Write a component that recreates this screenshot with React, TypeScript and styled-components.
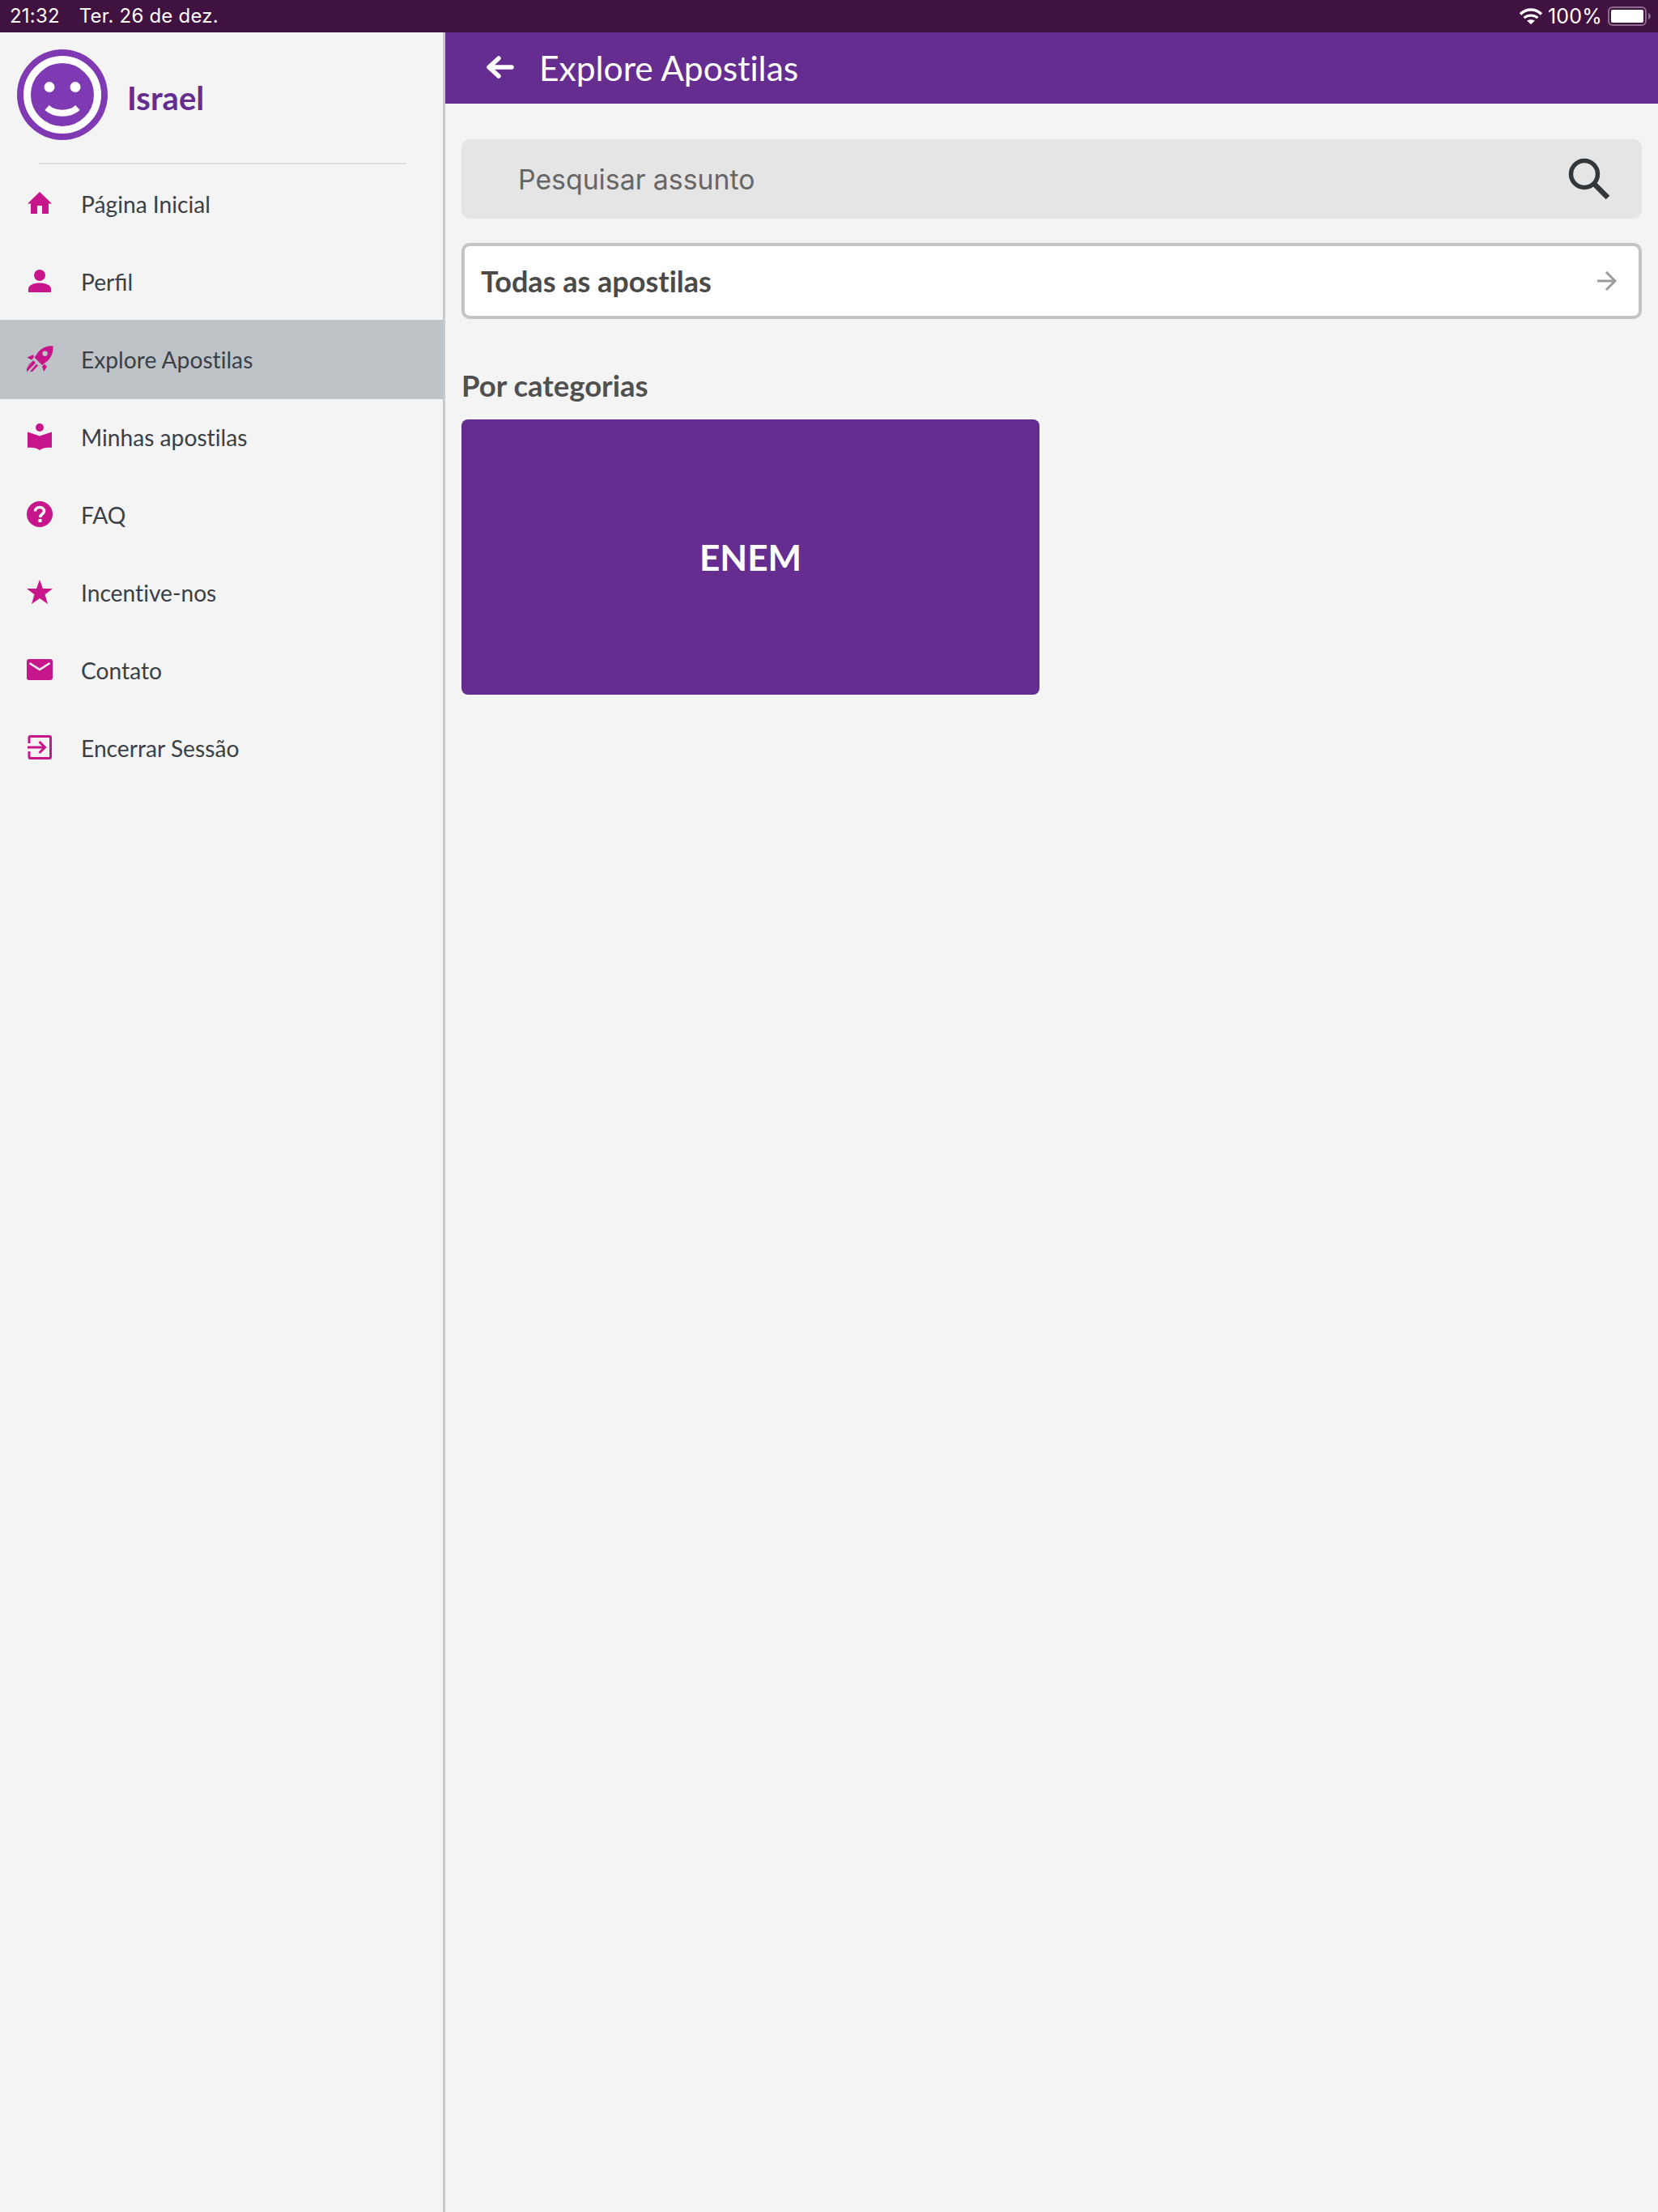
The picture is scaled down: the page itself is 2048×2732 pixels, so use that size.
import React from "react";
import styled, { createGlobalStyle } from "styled-components";

const Global = createGlobalStyle`
  html, body { margin: 0; padding: 0; background: #f4f4f4; }
  * { box-sizing: border-box; }
`;

const Page = styled.div`
  width: 2048px;
  height: 2732px;
  display: flex;
  flex-direction: column;
  background: #f4f4f4;
  font-family: Lato, "Liberation Sans", sans-serif;
  overflow: hidden;
`;

const StatusBar = styled.div`
  height: 40px;
  flex: none;
  background: #40123f;
  color: #fff;
  display: flex;
  align-items: center;
  justify-content: space-between;
  padding: 0 9px 0 12px;
  font-family: Inter, "Liberation Sans", sans-serif;
  font-size: 24px;
  letter-spacing: 0.2px;
  line-height: 40px;
`;

const StatusLeft = styled.div`
  display: flex;
  gap: 24px;
`;

const StatusRight = styled.div`
  display: flex;
  align-items: center;
  gap: 7px;
`;

const BatteryText = styled.span`
  font-size: 25px;
`;

const Body = styled.div`
  flex: 1;
  display: flex;
  min-height: 0;
`;

const Sidebar = styled.aside`
  width: 550px;
  flex: none;
  border-right: 3px solid #c9c9c9;
  background: #f4f4f4;
`;

const Profile = styled.div`
  height: 161px;
  padding: 21px 0 0 21px;
  display: flex;
  align-items: flex-start;
  gap: 24px;
`;

const UserName = styled.div`
  font-size: 40px;
  font-weight: 700;
  color: #652d8f;
  line-height: 46px;
  margin-top: 37px;
`;

const Divider = styled.div`
  height: 2px;
  margin: 0 45px 0 48px;
  background: #dedede;
`;

const Menu = styled.nav`
  padding-top: 1px;
  display: flex;
  flex-direction: column;
`;

const Row = styled.div<{ $active?: boolean }>`
  height: ${(p) => (p.$active ? "98px" : "96px")};
  margin: ${(p) => (p.$active ? "-1px 0" : "0")};
  padding-left: 32px;
  display: flex;
  align-items: center;
  gap: 34px;
  background: ${(p) => (p.$active ? "#bdc3c7" : "transparent")};
`;

const RowIcon = styled.div`
  width: 34px;
  height: 34px;
  flex: none;
  margin-top: -2px;
  color: #c7158c;
  display: flex;
  align-items: center;
  justify-content: center;
`;

const RowLabel = styled.span<{ $lig?: boolean }>`
  font-size: 28.200px;
  color: #3a4046;
  line-height: 34px;
  font-variant-ligatures: ${(p) => (p.$lig ? "normal" : "none")};
`;

const Main = styled.main`
  flex: 1;
  min-width: 0;
  display: flex;
  flex-direction: column;
`;

const Header = styled.header`
  height: 88px;
  flex: none;
  background: #652d8f;
  display: flex;
  align-items: center;
  padding-left: 51px;
  gap: 31px;
  color: #fff;
`;

const HeaderTitle = styled.h1`
  margin: 0;
  font-size: 42.500px;
  font-weight: 400;
  line-height: 50px;
  color: #fff;
  font-variant-ligatures: none;
`;

const Content = styled.div`
  padding: 44px 20px 0;
  display: flex;
  flex-direction: column;
`;

const SearchBox = styled.div`
  height: 98px;
  border-radius: 10px;
  background: #e5e5e5;
  display: flex;
  align-items: center;
  justify-content: space-between;
  padding: 0 39px 0 70px;
`;

const Placeholder = styled.span`
  font-family: Inter, "Liberation Sans", sans-serif;
  font-size: 33.800px;
  color: #666;
`;

const AllButton = styled.div`
  margin-top: 30px;
  height: 94px;
  border: 4px solid #c4c4c4;
  border-radius: 10px;
  background: #fff;
  display: flex;
  align-items: center;
  justify-content: space-between;
  padding: 0 27px 0 20px;
`;

const AllLabel = styled.span`
  font-size: 36px;
  font-weight: 700;
  color: #4a4a4a;
  font-variant-ligatures: none;
`;

const SectionTitle = styled.h2`
  margin: 60px 0 0;
  font-size: 36.500px;
  font-weight: 700;
  line-height: 44px;
  color: #505050;
`;

const CategoryCard = styled.div`
  margin-top: 20px;
  width: 714px;
  height: 340px;
  border-radius: 8px;
  background: #652d8f;
  color: #fff;
  display: flex;
  align-items: center;
  justify-content: center;
  font-size: 44px;
  font-weight: 700;
`;

const Svg = ({ w, h, children }: { w: number; h: number; children: React.ReactNode }) => (
  <svg width={w} height={h} viewBox={`0 0 ${w} ${h}`} fill="currentColor" style={{ display: "block", flex: "none" }}>
    {children}
  </svg>
);

const items: { label: string; active?: boolean; lig?: boolean; icon: React.ReactNode }[] = [
  {
    label: "Página Inicial",
    icon: (
      <Svg w={30} h={28}>
        <path d="M15 0 30 14.500H26V27H18V17H12V27H4V14.500H0Z" />
      </Svg>
    ),
  },
  {
    label: "Perfil",
    lig: true,
    icon: (
      <Svg w={30} h={28}>
        <circle cx="15" cy="7" r="7" />
        <path d="M1 28V24C1 19 8 16.500 15 16.500S29 19 29 24V28Z" />
      </Svg>
    ),
  },
  {
    label: "Explore Apostilas",
    active: true,
    icon: (
      <Svg w={33} h={33}>
        <path fillRule="evenodd" d="M32.500 0.500C33 7 31 13.500 26 18.500L19 24 9.500 14.500 14.500 7.500C19 2.500 26 -0.500 32.500 0.500ZM22.500 6.500A3.200 3.200 0 1 0 22.600 12.900 3.200 3.200 0 1 0 22.500 6.500Z" />
        <path d="M8 11 0.500 14.500 6 17.500 9 14ZM19 25.500 21 32 25 26 22 22.500Z" />
        <path d="M8 18 11 21 0 32.500V28ZM12 22.500 14 24.500 7 32 4 32ZM3 22.500 6 20 0 27Z" />
      </Svg>
    ),
  },
  {
    label: "Minhas apostilas",
    icon: (
      <Svg w={30} h={33}>
        <circle cx="15" cy="5" r="5" />
        <path d="M0 10.500 15 15.500 30 10.500V30C24 29.500 19 30 15 33 11 30 6 29.500 0 30Z" />
      </Svg>
    ),
  },
  {
    label: "FAQ",
    icon: (
      <svg width="32" height="32" viewBox="0 0 32 32" style={{ display: "block" }}>
        <circle cx="16" cy="16" r="16" fill="currentColor" />
        <path d="M10.500 12.500C10.500 9.500 13 7.500 16 7.500S21.500 9.500 21.500 12.200C21.500 16 17 15.500 16.500 20" fill="none" stroke="#f4f4f4" strokeWidth="3.600" />
        <rect x="14.500" y="22" width="4" height="4" fill="#f4f4f4" />
      </svg>
    ),
  },
  {
    label: "Incentive-nos",
    icon: (
      <Svg w={32} h={30}>
        <path d="M16 0 20 11H32L22.500 18.200 26 30 16 23 6 30 9.500 18.200 0 11H12Z" />
      </Svg>
    ),
  },
  {
    label: "Contato",
    icon: (
      <svg width="32" height="26" viewBox="0 0 32 26" style={{ display: "block" }}>
        <rect width="32" height="26" rx="3" fill="currentColor" />
        <path d="M3.500 5 16 13 28.500 5" fill="none" stroke="#f4f4f4" strokeWidth="2.600" />
      </svg>
    ),
  },
  {
    label: "Encerrar Sessão",
    icon: (
      <svg width="30" height="30" viewBox="0 0 30 30" fill="none" stroke="currentColor" strokeWidth="3" style={{ display: "block" }}>
        <path d="M2 10V3A1.500 1.500 0 0 1 3.500 1.500H27A1.500 1.500 0 0 1 28.500 3V27A1.500 1.500 0 0 1 27 28.500H3.500A1.500 1.500 0 0 1 2 27V20" />
        <path d="M0 15H21M14.500 8 21.500 15 14.500 22" />
      </svg>
    ),
  },
];

export default function App() {
  return (
    <>
      <Global />
      <Page>
        <StatusBar>
          <StatusLeft>
            <span>21:32</span>
            <span>Ter. 26 de dez.</span>
          </StatusLeft>
          <StatusRight>
            <svg width="28" height="20" viewBox="0 0 28 20" style={{ display: "block" }}>
              <path d="M1 7.500C4.500 4 9 2 14 2S23.500 4 27 7.500" fill="none" stroke="#fff" strokeWidth="3.400" />
              <path d="M5.500 12C8 10 11 9 14 9S20 10 22.500 12" fill="none" stroke="#fff" strokeWidth="3.200" />
              <path d="M9 15.500C11 14.500 12.500 14.200 14 14.200S17 14.500 19 15.500L14 20Z" fill="#fff" />
            </svg>
            <BatteryText>100%</BatteryText>
            <svg width="53" height="24" viewBox="0 0 53 24" style={{ display: "block" }}>
              <rect x="1" y="1" width="46" height="22" rx="5" fill="none" stroke="#8c6b8c" strokeWidth="2" />
              <rect x="4" y="4" width="40" height="16" rx="2" fill="#fff" />
              <path d="M50 8C52 9 53 10.500 53 12S52 15 50 16Z" fill="#8c6b8c" />
            </svg>
          </StatusRight>
        </StatusBar>
        <Body>
          <Sidebar>
            <Profile>
              <svg width="112" height="112" viewBox="0 0 112 112" style={{ display: "block", flex: "none" }}>
                <circle cx="56" cy="56" r="56" fill="#7e39b3" />
                <circle cx="56" cy="56" r="43.500" fill="#7e39b3" stroke="#fff" strokeWidth="9" />
                <circle cx="40" cy="46.500" r="6.500" fill="#fff" />
                <circle cx="72" cy="46.500" r="6.500" fill="#fff" />
                <path d="M37 72C47 81 65 81 75 72" fill="none" stroke="#fff" strokeWidth="8" />
              </svg>
              <UserName>Israel</UserName>
            </Profile>
            <Divider />
            <Menu>
              {items.map((it) => (
                <Row key={it.label} $active={it.active}>
                  <RowIcon>{it.icon}</RowIcon>
                  <RowLabel $lig={it.lig}>{it.label}</RowLabel>
                </Row>
              ))}
            </Menu>
          </Sidebar>
          <Main>
            <Header>
              <svg width="34" height="30" viewBox="0 0 34 30" fill="none" stroke="#fff" strokeWidth="5.500" strokeLinecap="round" strokeLinejoin="round" style={{ display: "block", flex: "none" }}>
                <path d="M3 14H31M15 3 3 14 15 25" />
              </svg>
              <HeaderTitle>Explore Apostilas</HeaderTitle>
            </Header>
            <Content>
              <SearchBox>
                <Placeholder>Pesquisar assunto</Placeholder>
                <svg width="52" height="52" viewBox="0 0 52 52" fill="none" stroke="#32373c" style={{ display: "block" }}>
                  <circle cx="20" cy="20" r="16.500" strokeWidth="5.500" />
                  <path d="M32 32 49 49" strokeWidth="6.500" />
                </svg>
              </SearchBox>
              <AllButton>
                <AllLabel>Todas as apostilas</AllLabel>
                <svg width="24" height="24" viewBox="0 0 24 24" fill="none" stroke="#9c9c9c" strokeWidth="3" style={{ display: "block" }}>
                  <path d="M0 12H22M11 1 22 12 11 23" />
                </svg>
              </AllButton>
              <SectionTitle>Por categorias</SectionTitle>
              <CategoryCard>ENEM</CategoryCard>
            </Content>
          </Main>
        </Body>
      </Page>
    </>
  );
}
